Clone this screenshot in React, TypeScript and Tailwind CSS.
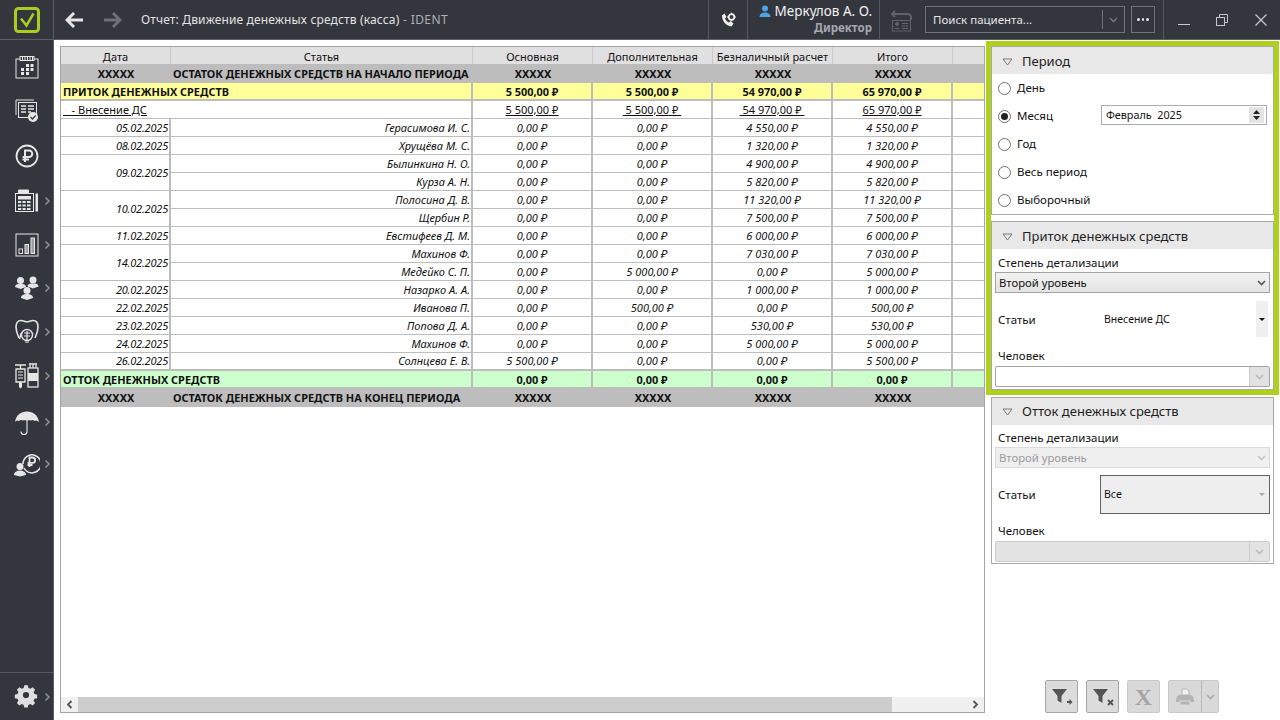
import React from "react";

const font = "font-['Noto_Sans',sans-serif]";

const Chev = () => (
  <svg width="7" height="10" viewBox="0 0 7 10" className="absolute left-[44px] top-1/2 -translate-y-1/2">
    <path d="M1.5 1.5 L5 5 L1.5 8.5" fill="none" stroke="#8b8e92" strokeWidth="1.6" />
  </svg>
);

const C = "#e6e6e6";

const SideIcons: { h: number; chev?: boolean; svg: React.ReactNode }[] = [
  {
    h: 44,
    svg: (
      <svg width="24" height="24" viewBox="0 0 24 24" fill="none">
        <rect x="1" y="4" width="22" height="19" stroke={C} strokeWidth="1" />
        <rect x="5" y="1.5" width="14" height="4" fill="#33363c" stroke={C} strokeWidth="1" />
        <path d="M7.5 2v3M10 2v3M12.5 2v3M15 2v3M17.5 2v3" stroke={C} strokeWidth="1" />
        <path d="M11 9h3v3h-3zM15.5 9h3v3h-3zM6 13h3v3H6zM11 13h3v3h-3zM15.5 13h3v3h-3zM6 17h3v3H6zM11 17h3v3h-3z" fill={C} />
      </svg>
    ),
  },
  {
    h: 42,
    svg: (
      <svg width="26" height="26" viewBox="0 0 26 26" fill="none">
        <path d="M2 3h18M2 3v15" stroke={C} strokeWidth="1" />
        <rect x="4.5" y="5.5" width="18" height="15" fill="#33363c" stroke={C} strokeWidth="1" />
        <path d="M7 9h5M14 9h6M7 12h5M14 12h6M7 15h5M14 15h3" stroke={C} strokeWidth="1.6" />
        <circle cx="19" cy="20" r="5" fill={C} />
        <path d="M16.5 20l2 2 3.2-3.6" stroke="#33363c" strokeWidth="1.3" />
      </svg>
    ),
  },
  {
    h: 50,
    svg: (
      <svg width="24" height="24" viewBox="0 0 24 24" fill="none">
        <circle cx="12" cy="12" r="10.5" stroke={C} strokeWidth="1.8" />
        <path d="M10 18V6.5h4a3.2 3.2 0 010 6.5H7.5M7.5 15.5H14" stroke={C} strokeWidth="2" />
      </svg>
    ),
  },
  {
    h: 40,
    chev: true,
    svg: (
      <svg width="24" height="24" viewBox="0 0 24 24" fill="none">
        <rect x="3" y="0.5" width="11" height="4" rx="1" fill={C} />
        <rect x="0.5" y="4.5" width="18" height="18" stroke={C} strokeWidth="1" />
        <rect x="3" y="7" width="13" height="3.5" fill={C} />
        <path d="M3 12h3.2v2H3zM7.5 12h3.2v2H7.5zM12 12h3.5v2H12zM3 15.5h3.2v2H3zM7.5 15.5h3.2v2H7.5zM12 15.5h3.5v2H12zM3 19h3.2v2H3zM7.5 19h3.2v2H7.5zM12 19h3.5v2H12z" fill={C} />
        <rect x="20.5" y="4.5" width="2.5" height="18" fill={C} />
      </svg>
    ),
  },
  {
    h: 48,
    chev: true,
    svg: (
      <svg width="24" height="24" viewBox="0 0 24 24" fill="none">
        <rect x="1" y="1" width="22" height="22" stroke={C} strokeWidth="1" />
        <rect x="4" y="16" width="3.5" height="4.5" fill="none" stroke={C} strokeWidth="1" />
        <rect x="10" y="11.5" width="3.5" height="9" fill="#9b9da0" stroke={C} strokeWidth="1" />
        <rect x="16" y="5" width="3.5" height="15.5" fill="#9b9da0" stroke={C} strokeWidth="1" />
      </svg>
    ),
  },
  {
    h: 38,
    chev: true,
    svg: (
      <svg width="26" height="24" viewBox="0 0 26 24" fill="none">
        <g fill={C}>
          <circle cx="6.5" cy="4.5" r="3.5" />
          <path d="M1 11c0-2.5 2.5-3 5.5-3s5.5.5 5.5 3l-5.500 2z" />
          <circle cx="19" cy="4" r="3.5" />
          <path d="M13.5 10.500c0-2.500 2.500-3 5.500-3s5.500.5 5.500 3l-5.500 2z" />
          <circle cx="13" cy="14.5" r="3.5" />
          <path d="M7 22c0-3 3-4 6-4s6 1 6 4l-6 2z" />
        </g>
      </svg>
    ),
  },
  {
    h: 50,
    chev: true,
    svg: (
      <svg width="24" height="26" viewBox="0 0 24 26" fill="none">
        <path d="M6 1.5c2.500 0 4 1.200 6 1.200s3.500-1.200 6-1.200c3 0 5 2.500 5 6.500 0 5-1.500 8-3 11M6 1.500C3 1.500 1 4 1 8c0 5 1.500 8 3 11" stroke={C} strokeWidth="1.6" />
        <path d="M4.500 20c1-3 1-5 2-6" stroke={C} strokeWidth="1.4" />
        <circle cx="12" cy="16" r="5.5" stroke={C} strokeWidth="1.4" />
        <path d="M9 14h6M9 17h6M12 12v10M10 23h4" stroke={C} strokeWidth="1.2" />
      </svg>
    ),
  },
  {
    h: 38,
    chev: true,
    svg: (
      <svg width="26" height="26" viewBox="0 0 26 26" fill="none">
        <path d="M1 2h11M6.500 2v4M2 6h9v13H2z" stroke={C} strokeWidth="1.3" />
        <path d="M4 9h5M4 12h5M4 15h5" stroke={C} strokeWidth="1.2" />
        <path d="M5 19h3v5l-1.500 1.500L5 24z" fill={C} />
        <path d="M16 1v4M19 1v4M22 1v4M15 1h8" stroke={C} strokeWidth="1.3" />
        <rect x="14" y="5" width="10" height="19" stroke={C} strokeWidth="1.3" />
        <rect x="14" y="10" width="10" height="8" fill={C} />
      </svg>
    ),
  },
  {
    h: 54,
    chev: true,
    svg: (
      <svg width="26" height="26" viewBox="0 0 26 26" fill="none">
        <path d="M1 13C2 6 7 2.500 13 2.500S24 6 25 13c-1.500-1.500-3-2-4.500-1-1-1-2.500-1.500-3.500-.5-1-.5-2.500-.5-4 0-1.500-.5-3-.5-4 0-1.500-1-3-.5-4 .5-1.500-1-3-.5-4.500 1z" fill={C} />
        <path d="M13 11v11.500a3 3 0 01-6 0" stroke={C} strokeWidth="1.1" />
      </svg>
    ),
  },
  {
    h: 30,
    chev: true,
    svg: (
      <svg width="26" height="26" viewBox="0 0 26 26" fill="none">
        <path d="M9 13a9 9 0 111 4" stroke={C} strokeWidth="1.5" />
        <path d="M15.500 16V6.500h3a2.600 2.600 0 010 5.300h-5M13.500 14h5" stroke={C} strokeWidth="1.8" />
        <circle cx="6" cy="15.500" r="3.500" fill={C} />
        <path d="M0 24c0-3 3-4.500 6-4.500s6 1.500 6 4.500l-6 1.500z" fill={C} />
      </svg>
    ),
  },
];

const TopBar = () => (
  <div className="flex h-[40px] shrink-0 items-stretch border-b border-[#5a5d62] bg-[#33363c]">
    <div className="flex w-[54px] shrink-0 items-center justify-center border-r border-[#5a5d62]">
      <svg width="26" height="26" viewBox="0 0 26 26" fill="none">
        <rect x="1.5" y="1.5" width="23" height="23" rx="3" stroke="#a9cc1e" strokeWidth="3" />
        <path d="M7 11.500l5.500 7L19.500 6.500" stroke="#a9cc1e" strokeWidth="2.5" />
      </svg>
    </div>
    <div className="ml-[11px] flex w-[18px] items-center">
      <svg width="18" height="16" viewBox="0 0 18 16" fill="none">
        <path d="M9 1L2 8l7 7M2 8h16" stroke="#e4e4e4" strokeWidth="3" />
      </svg>
    </div>
    <div className="ml-[21px] flex w-[18px] items-center">
      <svg width="18" height="16" viewBox="0 0 18 16" fill="none">
        <path d="M9 1l7 7-7 7M16 8H0" stroke="#6d7075" strokeWidth="3" />
      </svg>
    </div>
    <div className="ml-[19px] flex w-[567px] items-center text-[12px] text-[#e2e2e2]">
      <span className="tracking-[0.15px]">Отчет: Движение денежных средств (касса)</span>
      <span className="whitespace-pre tracking-[0.4px] text-[#aeb0b3]"> - IDENT</span>
    </div>
    <div className="flex w-[40px] items-center justify-center border-x border-[#55585d]">
      <svg width="16" height="16" viewBox="0 0 16 16" fill="none">
        <path d="M2 3.500L4.500 1.500 6.500 5 5 6.500c.7 1.800 2 3.200 3.800 4L10.500 9l3 2.500-2 3C6 14 2 9 2 3.500z" fill="#eee" />
        <circle cx="11.5" cy="5" r="2.8" stroke="#eee" strokeWidth="1.8" />
        <path d="M11.500 0.800v1.400M11.500 7.800v1.400M7.300 5h1.400M14.300 5h1.400" stroke="#eee" strokeWidth="1.3" />
      </svg>
    </div>
    <div className="flex w-[132px] flex-col items-end border-r border-[#55585d] pr-[7px] pt-[1px] leading-none">
      <div className="flex items-center">
        <svg width="12" height="13" viewBox="0 0 12 13" className="mr-[4px]">
          <circle cx="6" cy="3.5" r="3" fill="#4da3e6" />
          <path d="M0.500 12c0-3 2.500-4.500 5.500-4.500s5.500 1.500 5.500 4.500z" fill="#4da3e6" />
        </svg>
        <span className="text-[13.5px] leading-[20px] text-[#f2f2f2]">Меркулов А. О.</span>
      </div>
      <span className="text-[11.5px] font-bold leading-[14px] text-[#a4a8ad]">Директор</span>
    </div>
    <div className="flex w-[45px] items-center justify-center">
      <svg width="23" height="24" viewBox="0 0 23 24" fill="none" stroke="#5f6267">
        <path d="M4 3L0.800 6 4 9M1.500 6H16c2.500 0 4 1.500 4 4v2" strokeWidth="2" />
        <rect x="1.5" y="12.5" width="18" height="10.5" />
        <circle cx="6" cy="16" r="1.5" fill="#5f6267" />
        <path d="M3.500 20.500h5M11 15.500h6M11 18h6M11 20.500h6" strokeWidth="1.2" />
      </svg>
    </div>
    <div className="my-[6px] flex w-[200px] items-center border border-[#6f7276] pl-[7px]">
      <span className="flex-1 text-[11.5px] text-[#e6e6e6]">Поиск пациента...</span>
      <span className="flex h-[19px] w-[22px] items-center justify-center border-l border-[#6f7276]">
        <svg width="9" height="6" viewBox="0 0 9 6">
          <path d="M1 1l3.500 3.500L8 1" fill="none" stroke="#777a7e" strokeWidth="1.3" />
        </svg>
      </span>
    </div>
    <div className="my-[6px] ml-[6px] flex w-[24px] items-center justify-center gap-[2px] border border-[#6f7276]">
      <i className="h-[2.5px] w-[2.5px] rounded-full bg-[#e6e6e6]" />
      <i className="h-[2.5px] w-[2.5px] rounded-full bg-[#e6e6e6]" />
      <i className="h-[2.5px] w-[2.5px] rounded-full bg-[#e6e6e6]" />
    </div>
    <div className="ml-[8px] flex flex-1 items-center border-l border-[#55585d]">
      <div className="ml-[14px] mt-[10px] h-px w-[12px] bg-[#c4c6c8]" />
      <svg width="12" height="12" viewBox="0 0 12 12" fill="none" stroke="#c4c6c8" className="ml-[26px]">
        <rect x="0.5" y="3.5" width="8" height="8" />
        <path d="M3.500 3V0.500h8v8H9" />
      </svg>
      <svg width="12" height="12" viewBox="0 0 12 12" fill="none" stroke="#c4c6c8" strokeWidth="1.3" className="ml-[27px]">
        <path d="M0.500 0.500l11 11M11.500 0.500l-11 11" />
      </svg>
    </div>
  </div>
);

const Sidebar = () => (
  <div className="flex w-[54px] shrink-0 flex-col border-r border-[#5a5d62] bg-[#33363c]">
    <div className="flex flex-1 flex-col pt-[5px]">
      {SideIcons.map((s, i) => (
        <div key={i} className="relative flex shrink-0 items-center pl-[14px]" style={{ height: s.h }}>
          <div className="flex w-[26px] justify-center">{s.svg}</div>
          {s.chev && <Chev />}
        </div>
      ))}
    </div>
    <div className="relative flex h-[48px] items-center border-t border-[#55585d] pb-[4px] pl-[13px]">
      <svg width="26" height="26" viewBox="0 0 26 26">
        <path
          fillRule="evenodd"
          fill="#dedede"
          d="M11 2h4l.6 3 2.300 1 2.600-1.700 2.800 2.800-1.700 2.600 1 2.300 3 .6v4l-3 .6-1 2.300 1.700 2.600-2.800 2.800-2.600-1.700-2.300 1-.6 3h-4l-.6-3-2.300-1-2.600 1.700-2.800-2.800 1.700-2.600-1-2.300-3-.6v-4l3-.6 1-2.300-1.700-2.600 2.800-2.800 2.600 1.700 2.300-1zM13 9.500a3.500 3.500 0 100 7 3.500 3.500 0 000-7z"
          transform="translate(1.500 1.500) scale(0.885)"
        />
      </svg>
      <Chev />
    </div>
  </div>
);

type Row = [string | null, number, string, string, string, string, string];
const rows: Row[] = [
  ["05.02.2025", 1, "Герасимова И. С.", "0,00 ₽", "0,00 ₽", "4 550,00 ₽", "4 550,00 ₽"],
  ["08.02.2025", 1, "Хрущёва М. С.", "0,00 ₽", "0,00 ₽", "1 320,00 ₽", "1 320,00 ₽"],
  ["09.02.2025", 2, "Былинкина Н. О.", "0,00 ₽", "0,00 ₽", "4 900,00 ₽", "4 900,00 ₽"],
  [null, 1, "Курза А. Н.", "0,00 ₽", "0,00 ₽", "5 820,00 ₽", "5 820,00 ₽"],
  ["10.02.2025", 2, "Полосина Д. В.", "0,00 ₽", "0,00 ₽", "11 320,00 ₽", "11 320,00 ₽"],
  [null, 1, "Щербин Р.", "0,00 ₽", "0,00 ₽", "7 500,00 ₽", "7 500,00 ₽"],
  ["11.02.2025", 1, "Евстифеев Д. М.", "0,00 ₽", "0,00 ₽", "6 000,00 ₽", "6 000,00 ₽"],
  ["14.02.2025", 2, "Махинов Ф.", "0,00 ₽", "0,00 ₽", "7 030,00 ₽", "7 030,00 ₽"],
  [null, 1, "Медейко С. П.", "0,00 ₽", "5 000,00 ₽", "0,00 ₽", "5 000,00 ₽"],
  ["20.02.2025", 1, "Назарко А. А.", "0,00 ₽", "0,00 ₽", "1 000,00 ₽", "1 000,00 ₽"],
  ["22.02.2025", 1, "Иванова П.", "0,00 ₽", "500,00 ₽", "0,00 ₽", "500,00 ₽"],
  ["23.02.2025", 1, "Попова Д. А.", "0,00 ₽", "0,00 ₽", "530,00 ₽", "530,00 ₽"],
  ["24.02.2025", 1, "Махинов Ф.", "0,00 ₽", "0,00 ₽", "5 000,00 ₽", "5 000,00 ₽"],
  ["26.02.2025", 1, "Солнцева Е. В.", "5 500,00 ₽", "0,00 ₽", "0,00 ₽", "5 500,00 ₽"],
];

const th = "h-[17px] border-r border-[#c9c9c9] bg-[#e0e0e0] p-0 pt-[2px] text-center text-[11px] font-normal leading-[15px] text-[#111]";
const gray = "bg-[#bdbdbd] p-0 pt-[1px] text-center text-[10.9px] font-bold leading-[16px] text-[#111]";
const v = "border-r-2 border-[#bdbdbd]";
const td = `border-b border-[#bdbdbd] p-0 text-[11px] italic leading-[16px] text-[#111] ${v}`;
const yel = "border-b-2 bg-[#ffff99] p-0 pt-[1px] text-[10.9px] font-bold leading-[15px] text-[#111]";
const grn = "bg-[#ccffcc] p-0 pt-[1px] text-[10.9px] font-bold leading-[15px] text-[#111]";

const GrayRow = ({ title, h }: { title: string; h: string }) => (
  <tr>
    <td className={`${gray} ${h}`}>XXXXX</td>
    <td className={`${gray} ${h} pl-[2px] text-left`}>{title}</td>
    <td className={gray}>XXXXX</td>
    <td className={gray}>XXXXX</td>
    <td className={gray}>XXXXX</td>
    <td className={gray}>XXXXX</td>
    <td className={gray} />
  </tr>
);

const Table = () => (
  <div className="relative mb-[7px] ml-[6px] mt-[6px] flex h-[667px] w-[925px] flex-col border border-[#a4a4a4] bg-white">
    <div className="min-h-0 flex-1">
      <table className="w-[923px] table-fixed border-separate border-spacing-0">
        <colgroup>
          <col className="w-[110px]" />
          <col className="w-[302px]" />
          <col className="w-[120px]" />
          <col className="w-[120px]" />
          <col className="w-[120px]" />
          <col className="w-[120px]" />
          <col className="w-[31px]" />
        </colgroup>
        <thead>
          <tr>
            <th className={th}>Дата</th>
            <th className={th}>Статья</th>
            <th className={th}>Основная</th>
            <th className={th}>Дополнительная</th>
            <th className={th}>Безналичный расчет</th>
            <th className={th}>Итого</th>
            <th className="border-r-0 bg-[#e0e0e0] p-0" />
          </tr>
        </thead>
        <tbody>
          <GrayRow title="ОСТАТОК ДЕНЕЖНЫХ СРЕДСТВ НА НАЧАЛО ПЕРИОДА" h="h-[19px]" />
          <tr>
            <td colSpan={2} className={`h-[18px] pl-[2px] ${yel} ${v}`}>ПРИТОК ДЕНЕЖНЫХ СРЕДСТВ</td>
            {["5 500,00 ₽", "5 500,00 ₽", "54 970,00 ₽", "65 970,00 ₽"].map((x, i) => (
              <td key={i} className={`text-center ${yel} ${v}`}>{x}</td>
            ))}
            <td className="border-b-2 border-[#bdbdbd] bg-[#ffff99] p-0" />
          </tr>
          <tr>
            <td colSpan={2} className={`h-[18px] border-b border-[#bdbdbd] p-0 pl-[2px] text-[11px] leading-[16px] text-[#111] ${v}`}>
              <span className="whitespace-pre underline">{"   - Внесение ДС"}</span>
            </td>
            {["5 500,00 ₽", " 5 500,00 ₽ ", " 54 970,00 ₽ ", "65 970,00 ₽"].map((x, i) => (
              <td key={i} className={`border-b border-[#bdbdbd] p-0 text-center text-[11px] leading-[16px] text-[#111] ${v}`}>
                <span className="whitespace-pre underline">{x}</span>
              </td>
            ))}
            <td className="border-b border-[#bdbdbd] p-0" />
          </tr>
          {rows.map((r, i) => {
            const last = i === rows.length - 1;
            const bb = last ? "border-b-2" : "";
            return (
              <tr key={i}>
                {r[0] && (
                  <td rowSpan={r[1]} className={`${td} ${bb} h-[18px] pr-[1px] text-right tracking-[-0.2px]`}>{r[0]}</td>
                )}
                <td className={`${td} ${bb} h-[18px] pr-[1px] text-right`}>{r[2]}</td>
                <td className={`${td} ${bb} text-center`}>{r[3]}</td>
                <td className={`${td} ${bb} text-center`}>{r[4]}</td>
                <td className={`${td} ${bb} text-center`}>{r[5]}</td>
                <td className={`${td} ${bb} text-center`}>{r[6]}</td>
                <td className={`border-b border-[#bdbdbd] p-0 ${bb}`} />
              </tr>
            );
          })}
          <tr>
            <td colSpan={2} className={`h-[16px] pl-[2px] ${grn} ${v}`}>ОТТОК ДЕНЕЖНЫХ СРЕДСТВ</td>
            {[0, 1, 2, 3].map((x) => (
              <td key={x} className={`text-center ${grn} ${v}`}>0,00 ₽</td>
            ))}
            <td className="bg-[#ccffcc] p-0" />
          </tr>
          <GrayRow title="ОСТАТОК ДЕНЕЖНЫХ СРЕДСТВ НА КОНЕЦ ПЕРИОДА" h="h-[20px]" />
        </tbody>
      </table>
    </div>
    <div className="flex h-[15px] shrink-0 items-stretch bg-[#f0f0f0]">
      <div className="flex w-[17px] items-center justify-center">
        <svg width="7" height="9" viewBox="0 0 7 9"><path d="M5.5 1L2 4.500 5.500 8" fill="none" stroke="#555" strokeWidth="1.8" /></svg>
      </div>
      <div className="w-[814px] bg-[#cdcdcd]" />
      <div className="flex-1" />
      <div className="flex w-[18px] items-center justify-center">
        <svg width="7" height="9" viewBox="0 0 7 9"><path d="M1.5 1L5 4.500 1.500 8" fill="none" stroke="#555" strokeWidth="1.8" /></svg>
      </div>
    </div>
  </div>
);

const PanelHead = ({ title, textPad }: { title: string; textPad: string }) => (
  <div className={`flex h-[27px] shrink-0 items-center bg-[#e8e8e8] pl-[10px] text-[13px] text-[#222] ${textPad}`}>
    <svg width="11" height="8" viewBox="0 0 11 8" className="mr-[9px]">
      <path d="M1 1h9L5.500 7z" fill="none" stroke="#7a7a7a" />
    </svg>
    <span>{title}</span>
  </div>
);

const Radio = ({ label, on }: { label: string; on?: boolean }) => (
  <div className="flex h-[28px] items-center">
    <span className="mr-[6px] flex h-[13px] w-[13px] items-center justify-center rounded-full border border-[#6f6f6f] bg-white">
      {on && <i className="h-[7px] w-[7px] rounded-full bg-[#222]" />}
    </span>
    <span className="text-[11.5px] text-[#111]">{label}</span>
  </div>
);

const Chevron = ({ color }: { color: string }) => (
  <svg width="9" height="6" viewBox="0 0 9 6">
    <path d="M1 1l3.500 3.500L8 1" fill="none" stroke={color} strokeWidth="1.6" />
  </svg>
);

const FlowSection = ({ title, disabled, article }: { title: string; disabled?: boolean; article: string }) => (
  <>
    <PanelHead title={title} textPad={disabled ? "" : "pt-[3px]"} />
    <div className="flex flex-col px-[3px]">
      <div className={`pl-[3px] text-[11.5px] text-[#111] ${disabled ? "h-[22px] leading-[26px]" : "h-[23px] leading-[28px]"}`}>Степень детализации</div>
      <div
        className={
          disabled
            ? "flex h-[21px] items-center justify-between border border-[#dadada] bg-[#efefef] pl-[3px] pr-[3px] text-[11.3px] text-[#9c9c9c]"
            : "flex h-[21px] items-center justify-between border border-[#a3a3a3] bg-gradient-to-b from-[#f2f2f2] to-[#e4e4e4] pl-[3px] pr-[3px] text-[11.3px] text-[#111]"
        }
      >
        <span className="pt-[2px]">Второй уровень</span>
        <Chevron color={disabled ? "#c4c4c4" : "#555"} />
      </div>
      <div className={`flex ${disabled ? "mt-[7px] h-[39px]" : "mt-[8px] h-[36px]"} items-center pl-[3px] text-[11.5px] text-[#111]`}>
        <span className={`w-[102px] shrink-0 ${disabled ? "" : "pt-[2px]"}`}>Статьи</span>
        {disabled ? (
          <div className="flex h-full flex-1 items-center justify-between border border-[#606060] bg-[#eeeeee] pl-[3px] pr-[4px] text-[10.5px]">
            <span>{article}</span>
            <svg width="6" height="3" viewBox="0 0 6 3"><path d="M0 0h6L3 3z" fill="#aaa" /></svg>
          </div>
        ) : (
          <div className="flex h-full flex-1 items-center justify-between pl-[4px] pr-[2px] text-[10.5px]">
            <span className="pt-[2px]">{article}</span>
            <span className="flex h-full w-[12px] items-center justify-center bg-[#f0f0f0]">
              <svg width="6" height="3" viewBox="0 0 6 3"><path d="M0 0h6L3 3z" fill="#111" /></svg>
            </span>
          </div>
        )}
      </div>
      <div className={`${disabled ? "h-[27px] leading-[33px]" : "h-[29px] leading-[37px]"} pl-[3px] text-[11.5px] text-[#111]`}>Человек</div>
      <div
        className={
          disabled
            ? "flex h-[21px] items-stretch justify-end rounded-[2px] border border-[#cacaca] bg-[#e3e3e3]"
            : "flex h-[21px] items-stretch justify-end rounded-[2px] border border-[#a3a3a3] bg-white"
        }
      >
        <span className={`flex w-[20px] items-center justify-center border-l ${disabled ? "border-[#cacaca]" : "border-[#c9c9c9] bg-[#e2e2e2]"}`}>
          <Chevron color="#bdbdbd" />
        </span>
      </div>
    </div>
  </>
);

const ToolBtn = ({ children, on }: { children: React.ReactNode; on?: boolean }) => (
  <div className={`flex h-[33px] w-[33px] items-center justify-center rounded-[2px] border ${on ? "border-[#a6a6a6] bg-[#dcdcdc]" : "border-[#c9c9c9] bg-[#d9d9d9]"}`}>
    {children}
  </div>
);

const Funnel = () => <path d="M2 3h15l-5.500 7v7l-4 -2.500V10z" fill="#555" />;

const RightPane = () => (
  <div className="flex w-[295px] shrink-0 flex-col bg-white pl-[1px] pr-[1px] pt-[1px]">
    <div className="flex flex-col border-[5px] border-[#afd11e]">
      <div className="flex h-[169px] flex-col border border-[#a8a8a8]">
        <PanelHead title="Период" textPad="pt-[3px]" />
        <div className="relative flex flex-col px-[6px]">
          <Radio label="День" />
          <div className="flex items-center">
            <div className="w-[102px] shrink-0"><Radio label="Месяц" on /></div>
            <div className="mb-[2px] ml-[1px] flex h-[20px] flex-1 items-center justify-between border border-[#ababab] pl-[4px] pr-[2px] text-[10.8px] text-[#111]">
              <span className="whitespace-pre">{"Февраль  2025"}</span>
              <span className="flex h-[16px] w-[15px] flex-col items-center justify-center gap-[2px] bg-[#e4e4e4]">
                <svg width="7" height="4" viewBox="0 0 7 4"><path d="M0 4h7L3.500 0z" fill="#222" /></svg>
                <svg width="7" height="4" viewBox="0 0 7 4"><path d="M0 0h7L3.500 4z" fill="#222" /></svg>
              </span>
            </div>
          </div>
          <Radio label="Год" />
          <Radio label="Весь период" />
          <Radio label="Выборочный" />
        </div>
      </div>
      <div className="mt-[6px] flex h-[169px] flex-col border border-[#a8a8a8]">
        <FlowSection title="Приток денежных средств" article="Внесение ДС" />
      </div>
    </div>
    <div className="mx-[5px] mt-[2px] flex h-[167px] flex-col border border-[#a8a8a8]">
      <FlowSection title="Отток денежных средств" article="Все" disabled />
    </div>
    <div className="mb-[7px] mt-auto flex gap-[8px] pl-[59px]">
      <ToolBtn on>
        <svg width="24" height="22" viewBox="0 0 24 22"><Funnel /><path d="M17 15h2.500v-2l3 3-3 3v-2H17z" fill="#555" /></svg>
      </ToolBtn>
      <ToolBtn on>
        <svg width="24" height="22" viewBox="0 0 24 22"><Funnel /><path d="M17 14l5 5M22 14l-5 5" stroke="#555" strokeWidth="1.8" /></svg>
      </ToolBtn>
      <ToolBtn>
        <span className="font-['Liberation_Serif',serif] text-[24px] font-bold leading-none text-[#a5a5a5]">X</span>
      </ToolBtn>
      <div className="flex h-[33px] w-[51px] rounded-[2px] border border-[#c9c9c9] bg-[#d9d9d9]">
        <div className="flex w-[32px] items-center justify-center">
          <svg width="20" height="18" viewBox="0 0 20 18">
            <path d="M7 1h5l2 2v4H7z" fill="#f0f0f0" stroke="#b4b4b4" />
            <path d="M1 12c0-3 2-5 4-5h10c2 0 4 2 4 5v2H1z" fill="#b4b4b4" />
            <rect x="5" y="13" width="10" height="4" fill="#b4b4b4" stroke="#d9d9d9" />
          </svg>
        </div>
        <div className="flex flex-1 items-center justify-center border-l border-[#b9b9b9]">
          <Chevron color="#aaa" />
        </div>
      </div>
    </div>
  </div>
);

export default function App() {
  return (
    <div className={`flex h-[720px] w-[1280px] flex-col overflow-hidden bg-white ${font}`}>
      <TopBar />
      <div className="flex min-h-0 flex-1">
        <Sidebar />
        <div className="w-[931px] shrink-0 bg-white">
          <Table />
        </div>
        <RightPane />
      </div>
    </div>
  );
}
